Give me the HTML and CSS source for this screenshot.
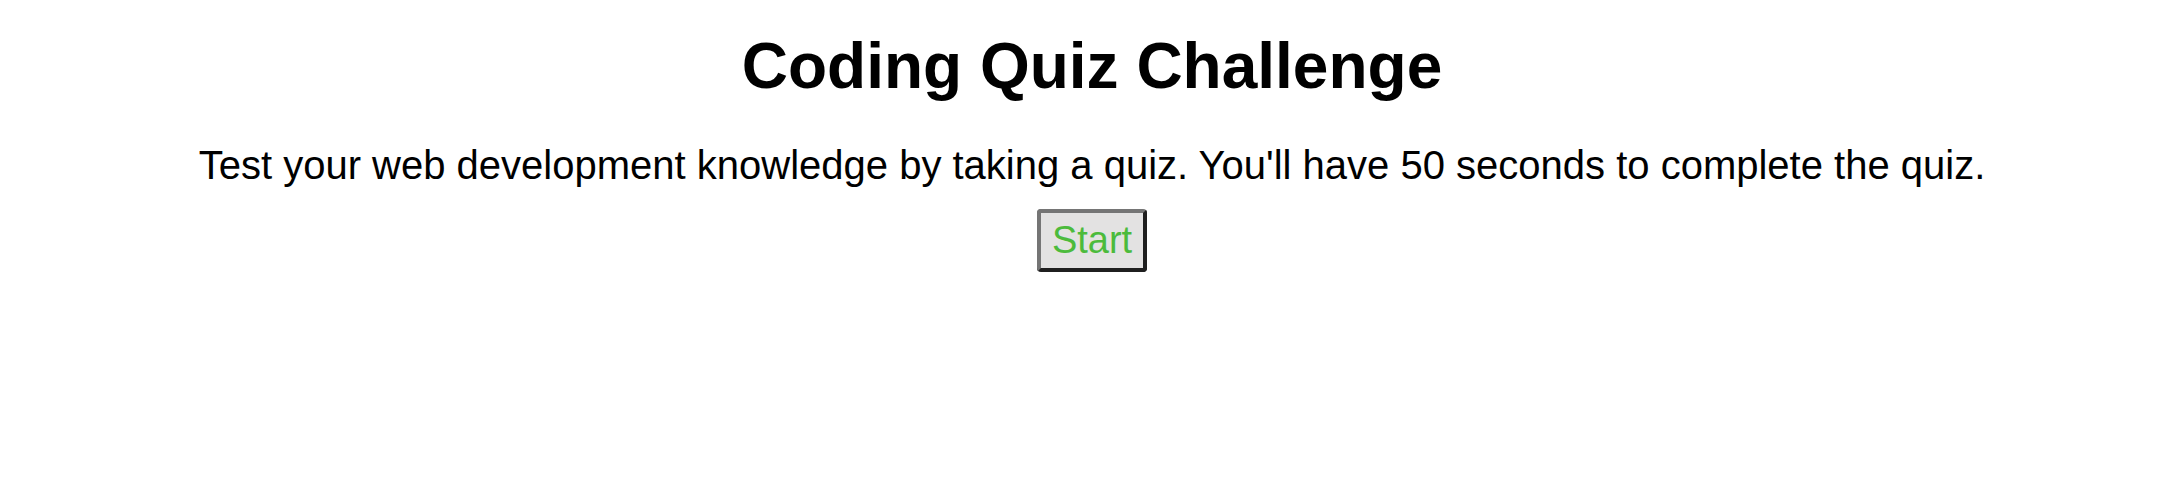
FILE: index.html
```html
<!DOCTYPE html>
<html>
<head>
<meta charset="utf-8">
<link rel="stylesheet" href="styles.css">
</head>
<body>
<main class="intro">
  <h1 class="title">Coding Quiz Challenge</h1>
  <p class="lead">Test your web development knowledge by taking a quiz. You'll have 50 seconds to complete the quiz.</p>
  <button class="start">Start</button>
</main>
</body>
</html>
```
FILE: styles.css
```css
body {
  margin: 8px;
  background: #fff;
  font-family: "Liberation Sans", Arial, sans-serif;
  color: #000;
}
.intro {
  display: flex;
  flex-direction: column;
  align-items: center;
  text-align: center;
  padding-left: 16px;
}
.title {
  font-size: 64px;
  font-weight: bold;
  margin: 22px 0 0;
  line-height: 1.15;
}
.lead {
  font-size: 40px;
  margin: 38px 0 0;
  line-height: 1.15;
}
.start {
  margin-top: 21px;
  font-family: "Liberation Sans", Arial, sans-serif;
  font-size: 38px;
  color: #4cbb3c;
  background: #e3e2e2;
  border: 4px solid;
  border-color: #757575 #1f1f1f #1f1f1f #757575;
  border-radius: 4px;
  padding: 6px 11px;
  line-height: 1.15;
}
```
